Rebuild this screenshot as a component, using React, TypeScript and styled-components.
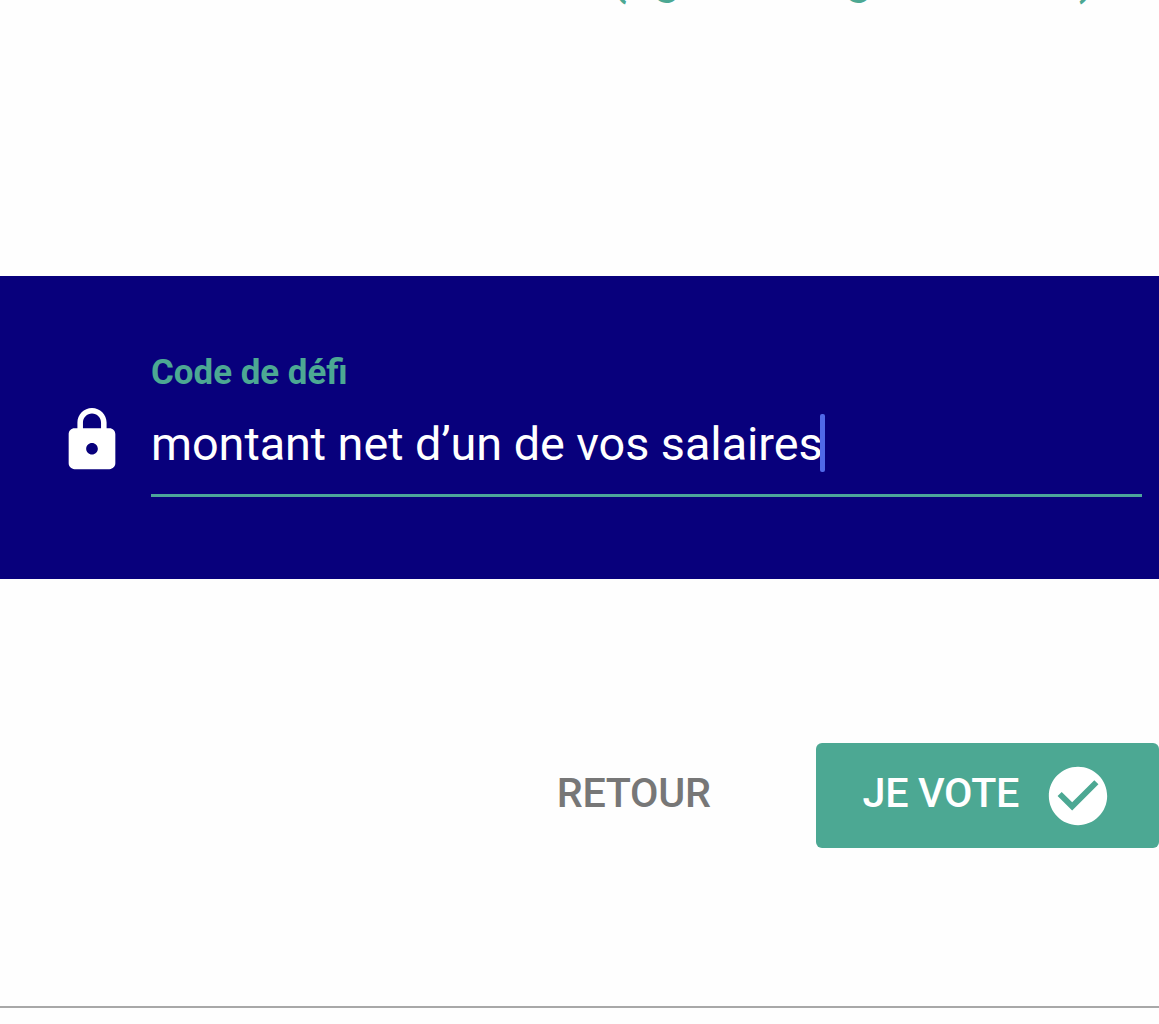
import { useState } from "react";
import styled, { createGlobalStyle } from "styled-components";
import { MdCheckCircle, MdLock } from "react-icons/md";

const GlobalStyle = createGlobalStyle`
  * {
    box-sizing: border-box;
  }
  body {
    margin: 0;
    background: #fefefe;
    font-family: Roboto, "Liberation Sans", sans-serif;
    overflow: hidden;
  }
`;

const App = () => {
  const [code] = useState("montant net d’un de vos salaires");

  return (
    <Page>
      <GlobalStyle />
      <Intro>
        <Hint>(figure bas général net)</Hint>
      </Intro>
      <ChallengeBand>
        <LockIcon />
        <Field>
          <Label>Code de défi</Label>
          <Value>
            <span>{code}</span>
            <Caret />
          </Value>
        </Field>
      </ChallengeBand>
      <Actions>
        <Button>RETOUR</Button>
        <Button $primary>
          JE VOTE
          <CheckIcon />
        </Button>
      </Actions>
      <Divider />
    </Page>
  );
};

const Page = styled.main`
  width: 1159px;
  height: 1024px;
  overflow: hidden;
`;

const Intro = styled.section`
  display: flex;
  align-items: flex-start;
  justify-content: flex-end;
  height: 276px;
  padding-right: 64px;
`;

const Hint = styled.p`
  margin: -50px 0 0;
  font-size: 46.6px;
  line-height: 56px;
  font-weight: 500;
  color: #4ca893;
  white-space: nowrap;
`;

const ChallengeBand = styled.section`
  display: flex;
  align-items: flex-start;
  height: 303px;
  padding: 76px 17px 0 56px;
  background: #08007c;
`;

const LockIcon = styled(MdLock)`
  flex: none;
  width: 70px;
  height: 70px;
  margin: 53px 24px 0 1px;
  color: #fff;
`;

const Field = styled.div`
  flex: 1;
  height: 145px;
  border-bottom: 3px solid #4ca59a;
`;

const Label = styled.div`
  font-size: 34.9px;
  line-height: 42px;
  font-weight: 700;
  color: #4ca893;
`;

const Value = styled.div`
  display: flex;
  align-items: center;
  height: 58px;
  margin-top: 20px;
  font-size: 46.8px;
  line-height: 58px;
  letter-spacing: -0.06px;
  color: #fff;
  white-space: nowrap;

  span:first-child {
    padding-top: 2px;
  }
`;

const Caret = styled.span`
  flex: none;
  width: 5px;
  height: 58px;
  margin-left: -3px;
  border-radius: 2px;
  background: #5068e8;
`;

const Actions = styled.div`
  display: flex;
  justify-content: flex-end;
  gap: 57px;
  height: 427px;
  padding-top: 164px;
`;

const Button = styled.button<{ $primary?: boolean }>`
  display: flex;
  align-items: center;
  height: 105px;
  padding: 0 47px;
  padding-right: ${({ $primary }) => ($primary ? "46px" : "48px")};
  padding-bottom: 5px;
  border: 0;
  border-radius: 6px;
  background: ${({ $primary }) => ($primary ? "#4ca893" : "transparent")};
  color: ${({ $primary }) => ($primary ? "#fff" : "#777")};
  font-family: inherit;
  font-size: 41.3px;
  font-weight: 500;
  letter-spacing: -0.35px;
  white-space: nowrap;
`;

const CheckIcon = styled(MdCheckCircle)`
  flex: none;
  width: 70px;
  height: 70px;
  margin: 5px 0 0 24px;
`;

const Divider = styled.hr`
  height: 2px;
  margin: 0;
  border: 0;
  background: #a8a8a8;
`;

export default App;
